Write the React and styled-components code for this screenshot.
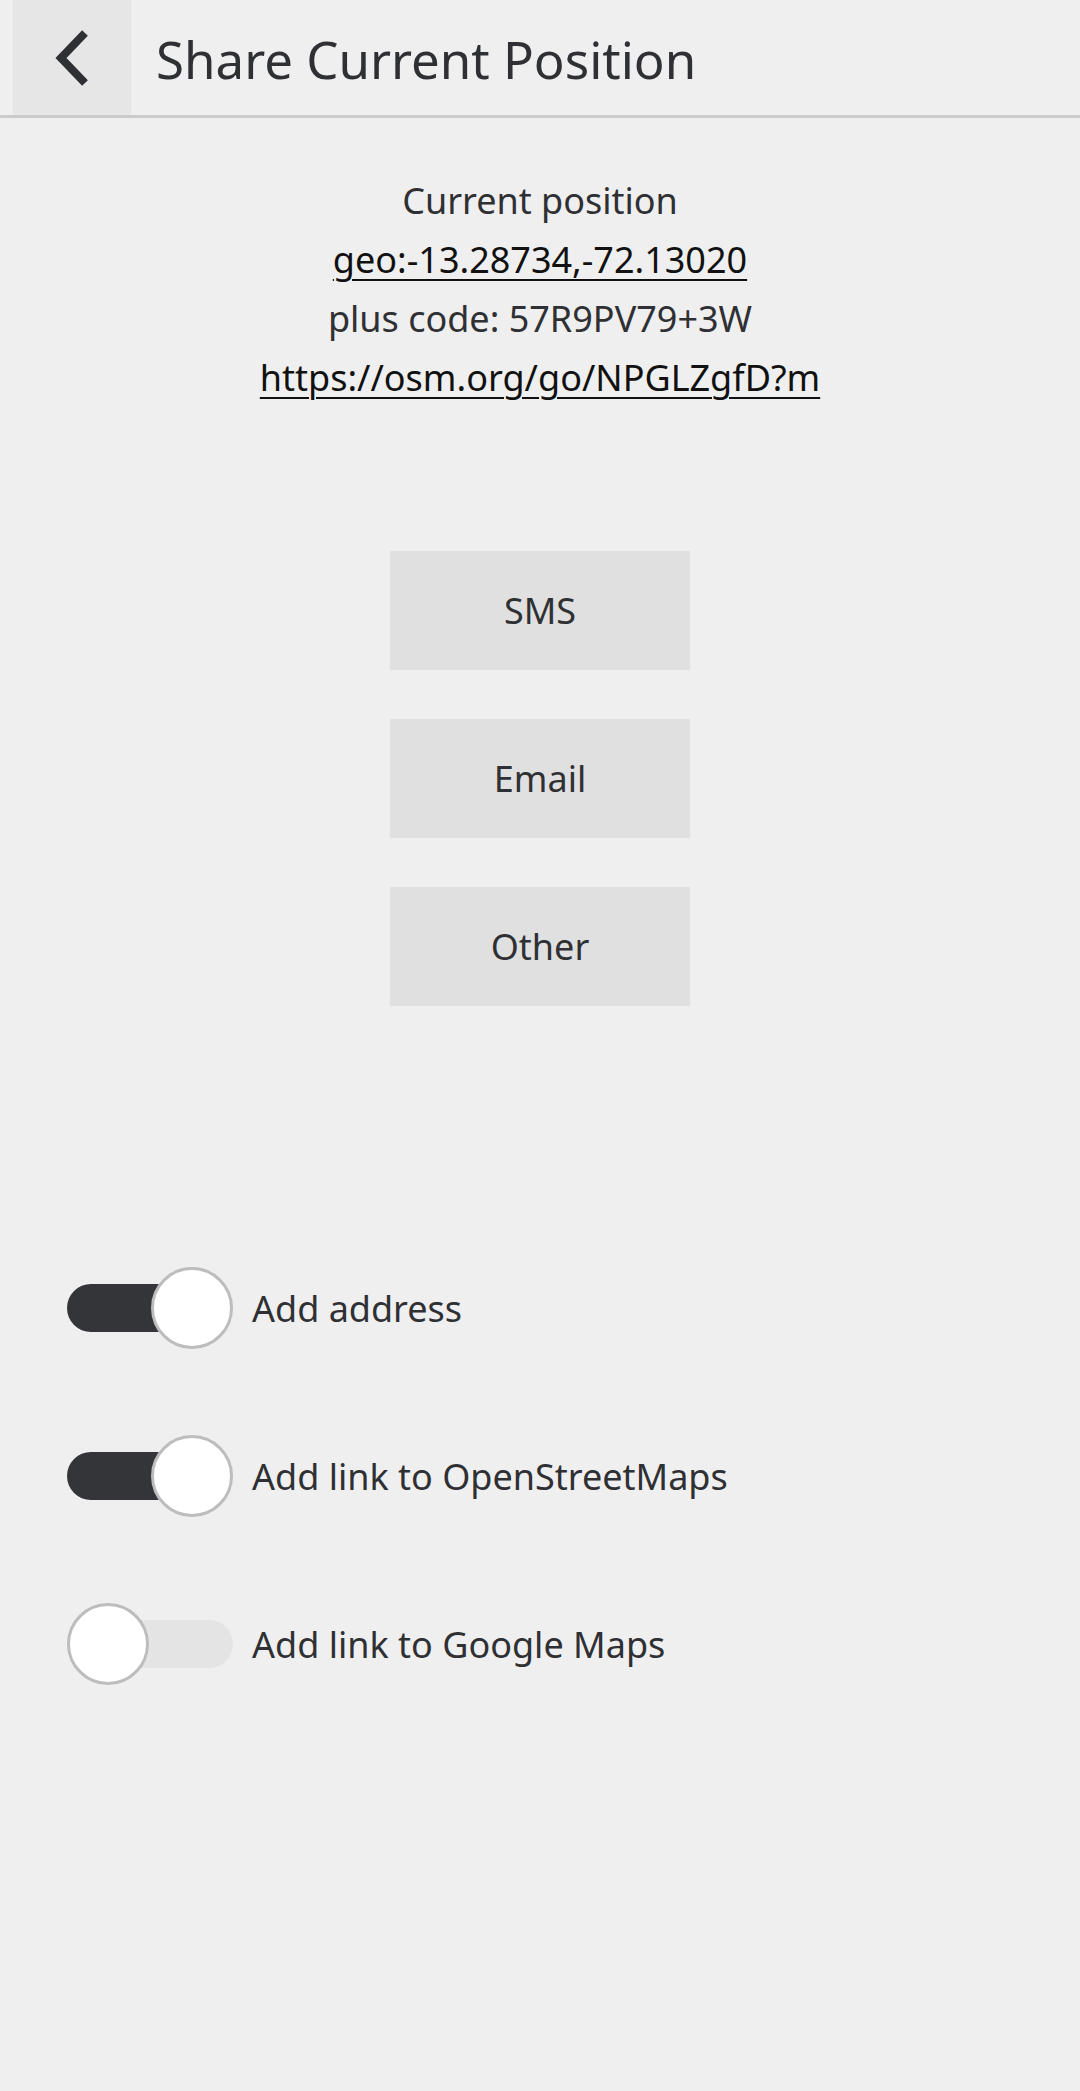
import React, { useState } from 'react';
import styled, { createGlobalStyle } from 'styled-components';

const GlobalStyle = createGlobalStyle`
  html, body {
    margin: 0;
    padding: 0;
    background: #efefef;
  }
  body {
    font-family: "Noto Sans", "Open Sans", sans-serif;
    color: #2f3033;
  }
`

const Page = styled.div`
  min-height: 2091px;
  background: #efefef;
`

const Header = styled.header`
  display: flex;
  align-items: center;
  height: 115px;
  border-bottom: 3px solid #cbcbcb;
`

const BackButton = styled.button`
  display: flex;
  align-items: center;
  justify-content: center;
  width: 118px;
  height: 100%;
  margin-left: 13px;
  padding: 0;
  border: none;
  background: #e6e6e6;
  cursor: pointer;
`

const Title = styled.h1`
  margin: 2px 0 0 25px;
  font-size: 51px;
  font-weight: 400;
  color: #2f3033;
`

const Info = styled.div`
  display: flex;
  flex-direction: column;
  align-items: center;
  margin-top: 53px;
  font-size: 36px;
  line-height: 59px;
`

const InfoLink = styled.a`
  color: #111;
  text-decoration: underline;
  text-underline-offset: 6px;
  text-decoration-thickness: 2px;
`

const Buttons = styled.div`
  display: flex;
  flex-direction: column;
  align-items: center;
  gap: 49px;
  margin-top: 144px;
`

const ShareButton = styled.button`
  width: 300px;
  height: 119px;
  border: none;
  background: #e0e0e0;
  font-family: inherit;
  font-size: 36px;
  color: #2f3033;
  cursor: pointer;
`

const Options = styled.div`
  display: flex;
  flex-direction: column;
  gap: 86px;
  margin-top: 261px;
  padding-left: 67px;
`

const OptionRow = styled.label`
  display: flex;
  align-items: center;
  height: 82px;
  font-size: 36px;
  cursor: pointer;
`

const Track = styled.span`
  position: relative;
  display: block;
  width: 166px;
  height: 48px;
  border-radius: 24px;
  background: ${p => (p.$on ? 'linear-gradient(to right, #333538 60%, #e4e4e4 60%)' : '#e4e4e4')};
  margin-right: 19px;
  flex-shrink: 0;
`

const Thumb = styled.span`
  position: absolute;
  top: -17px;
  left: ${p => (p.$on ? '84px' : '0')};
  width: 82px;
  height: 82px;
  box-sizing: border-box;
  border-radius: 50%;
  border: 3px solid #bdbdbd;
  background: #fff;
`

function Toggle({ on }) {
  return (
    <Track $on={on}>
      <Thumb $on={on} />
    </Track>
  )
}

export default function App() {
  const [opts, setOpts] = useState({ address: true, osm: true, google: false });
  const flip = key => setOpts(o => ({ ...o, [key]: !o[key] }));

  return (
    <Page>
      <GlobalStyle />
      <Header>
        <BackButton aria-label="Back">
          <svg width="36" height="56" viewBox="0 0 36 56">
            <polyline points="31,3 7,28 31,53" fill="none" stroke="#2f3033" strokeWidth="8" />
          </svg>
        </BackButton>
        <Title>Share Current Position</Title>
      </Header>

      <Info>
        <span>Current position</span>
        <InfoLink href="#">geo:-13.28734,-72.13020</InfoLink>
        <span>plus code: 57R9PV79+3W</span>
        <InfoLink href="#">https://osm.org/go/NPGLZgfD?m</InfoLink>
      </Info>

      <Buttons>
        <ShareButton>SMS</ShareButton>
        <ShareButton>Email</ShareButton>
        <ShareButton>Other</ShareButton>
      </Buttons>

      <Options>
        <OptionRow onClick={() => flip('address')}>
          <Toggle on={opts.address} />
          Add address
        </OptionRow>
        <OptionRow onClick={() => flip('osm')}>
          <Toggle on={opts.osm} />
          Add link to OpenStreetMaps
        </OptionRow>
        <OptionRow onClick={() => flip('google')}>
          <Toggle on={opts.google} />
          Add link to Google Maps
        </OptionRow>
      </Options>
    </Page>
  )
}
